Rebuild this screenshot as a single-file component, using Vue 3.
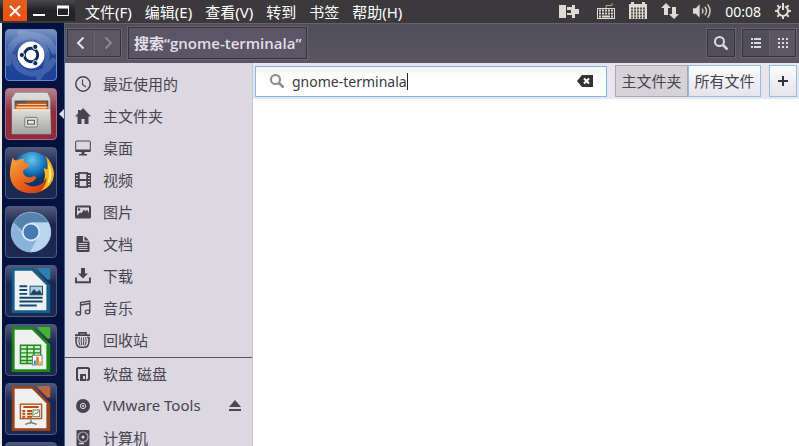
<script setup>
import { ref } from 'vue'

const query = ref('gnome-terminala')
const scope = ref('home')
const menus = ['文件(F)', '编辑(E)', '查看(V)', '转到', '书签', '帮助(H)']

const places = [
  { name: '最近使用的', icon: '<circle cx="8" cy="8" r="7.2" fill="none" stroke="currentColor" stroke-width="1.5"/><path d="M7.5 3.5V8.5L11 11" fill="none" stroke="currentColor" stroke-width="1.1"/>' },
  { name: '主文件夹', icon: '<path d="M8 0 16 8.500H13.500V16H9.500V11H6.500V16H2.500V8.500H0L3 5.500V2H5.500V3Z" fill="currentColor"/>' },
  { name: '桌面', icon: '<rect x=".7" y="1" width="14.600" height="10.500" rx="1" fill="none" stroke="currentColor"/><path d="M.5 9.500H15.500V12H.5ZM6.500 12H9.500V14H12V15.500H4V14H6.500Z" fill="currentColor"/>' },
  { name: '视频', icon: '<rect x="3.800" y="1" width="8.400" height="14" fill="none" stroke="currentColor" stroke-width="1.800"/><path d="M4 8H12" stroke="currentColor" stroke-width="2"/><path d="M1.500 1V15.500M14.500 1V15.500" stroke="currentColor" stroke-width="3" stroke-dasharray="2 1"/><path d="M.5 1V15.500M15.500 1V15.500" stroke="currentColor"/>' },
  { name: '图片', icon: '<path fill-rule="evenodd" d="M1.500 1.500H14.500Q16 1.500 16 3V13Q16 14.500 14.500 14.500H1.500Q0 14.500 0 13V3Q0 1.500 1.500 1.500ZM2 3.500V11.500L5 8.500 6.500 9 9 5.500 10.500 7.500 12 5.500 14 9V3.500Z" fill="currentColor"/><circle cx="4" cy="5.500" r="1.300" fill="currentColor"/>' },
  { name: '文档', icon: '<path d="M2 0H8V5.500H14.500V14.500Q14.500 16 13 16H3Q1.500 16 1.500 14.500V1Z" fill="currentColor"/><path d="M9.500 0 14 4.500H9.500Z" fill="currentColor"/><path d="M3.500 7.500H12.500M3.500 9.500H12.500M3.500 11.500H12.500M3.500 13.500H12.500" stroke="#dcd8e2" stroke-width=".9"/>' },
  { name: '下载', icon: '<path d="M6 0H10V5.500H13L8 10.500 3 5.500H6Z" fill="currentColor"/><path d="M1 9.500V14.200H15V9.500" fill="none" stroke="currentColor" stroke-width="1.900"/>' },
  { name: '音乐', icon: '<path d="M5.500 13V2.500L14.800 1V11.500M5.500 5 14.800 3.500" fill="none" stroke="currentColor" stroke-width="1.300"/><ellipse cx="3.300" cy="13.500" rx="2.300" ry="1.800" fill="none" stroke="currentColor" stroke-width="1.300"/><ellipse cx="12.500" cy="12" rx="2.300" ry="1.800" fill="none" stroke="currentColor" stroke-width="1.300"/>' },
  { name: '回收站', icon: '<path d="M0 3.200H15M4 3V.9H11V3" fill="none" stroke="currentColor" stroke-width="1.700"/><path d="M3 5.500H1V8Q1 15 5 15.200H10Q14 15 14 8V5.500H12" fill="none" stroke="currentColor" stroke-width="1.600"/><path d="M4.500 5Q2.800 9 5 13.500M6.500 5.500Q5.800 9 6.700 13M8.500 5.500Q9.200 9 8.300 13M10.500 5Q12.200 9 10 13.500" fill="none" stroke="currentColor"/>' },
]

const devices = [
  { name: '软盘 磁盘', icon: '<path d="M4 14H2.500L2 13V3L3 2H13L14 3V13L13 14H11.500" fill="none" stroke="currentColor" stroke-width="2"/><path d="M5 8H11V15H5ZM8 10V13H10V10Z" fill-rule="evenodd" fill="currentColor"/>' },
  { name: 'VMware Tools', eject: true, icon: '<circle cx="8" cy="8" r="7" fill="currentColor"/><circle cx="8" cy="8" r="2.600" fill="none" stroke="#dcd8e2"/><circle cx="8" cy="8" r="1" fill="#dcd8e2"/>' },
  { name: '计算机', icon: '<rect x="1.500" y="0" width="13" height="16" rx="1" fill="currentColor"/><circle cx="8" cy="7" r="5" fill="none" stroke="#aaa6b2" stroke-width="1.200"/><circle cx="8" cy="7" r="1.500" fill="#dcd8e2"/><path d="M4 13.500H9" stroke="#dcd8e2" stroke-width="1.500"/>' },
]
</script>

<template>
  <div class="desktop">
    <header class="menubar">
      <div class="window-buttons">
        <button class="close" aria-label="关闭">
          <svg width="12" height="12" viewBox="0 0 12 12"><path d="M1 1 11 11M11 1 1 11" stroke="#fff" stroke-width="2" /></svg>
        </button>
        <button aria-label="最小化"><svg width="12" height="12" viewBox="0 0 12 12"><path d="M0 10H12" stroke="#fff" stroke-width="2" /></svg></button>
        <button aria-label="最大化"><svg width="12" height="12" viewBox="0 0 12 12"><path d="M.5 1V10.500H11.500V1" fill="none" stroke="#fff" /><path d="M0 2H12" stroke="#fff" stroke-width="3" /></svg></button>
      </div>
      <nav class="menus">
        <button v-for="m in menus" :key="m">{{ m }}</button>
      </nav>
      <div class="indicators">
        <button class="power" aria-label="电源"><svg width="20" height="16" viewBox="0 0 20 16"><path fill="#dfdbd2" d="M0 2H7V15H0ZM8 4H13V2H16V6H20V11H16V15H13V12H8V10H12V7H8Z" /></svg></button>
        <button aria-label="键盘"><svg width="18" height="18" viewBox="1 0 18 18"><path d="M10 6V3.500H16V1" fill="none" stroke="#aaa7a1" /><rect x="1.500" y="6.500" width="17" height="10" fill="none" stroke="#dfdbd2" /><path d="M3 8.500H17M3 11.500H17" stroke="#dfdbd2" stroke-width="2" stroke-dasharray="2 1" /><path d="M3 14.500H5M6 14.500H14M15 14.500H17" stroke="#dfdbd2" stroke-width="2" /></svg></button>
        <button aria-label="日历"><svg width="18" height="18" viewBox="0 0 18 18"><path d="M0 2H2V0H5V2H13V0H16V2H18V17H0Z" fill="#dfdbd2" /><path d="M2 6.500H16M2 9.500H16M2 12.500H16M2 15.500H16" stroke="#55524f" stroke-width="2" stroke-dasharray="2 1" /></svg></button>
        <button aria-label="网络"><svg width="18" height="16" viewBox="0 0 18 16"><path fill="#dfdbd2" d="M5 0 10 5H7V12H3V5H0ZM11 4H15V11H18L13 16 8 11H11Z" /></svg></button>
        <button aria-label="音量"><svg width="18" height="16" viewBox="0 0 19 16"><path fill="#dfdbd2" d="M0 5H3L7 1V15L3 11H0Z" /><path d="M9.500 5.500Q11.500 8 9.500 10.500M12.500 3.500Q16 8 12.500 12.500M15.500 1Q20.500 8 15.500 15" fill="none" stroke="#c9c5be" stroke-width="1.600" /></svg></button>
        <time>00:08</time>
        <button aria-label="系统"><svg width="16" height="16" viewBox="0 0 16 16"><g fill="none" stroke="#dfdbd2"><path d="M6 3.300A5 5 0 1 0 10 3.300" stroke-width="2" /><path d="M8 0V7M0 8H3M13 8H16M8 13V16M2.300 2.300 4.400 4.400M13.700 2.300 11.600 4.400M2.300 13.700 4.400 11.600M13.700 13.700 11.600 11.600" stroke-width="2" /></g></svg></button>
      </div>
    </header>

    <div class="workspace">
      <nav class="launcher" aria-label="启动器">
        <button class="tile dash" aria-label="Dash">
          <svg viewBox="0 0 52 52">
            <g fill="none" stroke="#c9d9f6" stroke-linecap="round" opacity=".2"><path d="M2 34Q2 8 27 6 44 6 50 22" stroke-width="7" /><path d="M14 3Q38 2 43 26 43 40 34 50" stroke-width="5" /><path d="M49 32Q42 47 24 45 10 42 8 28" stroke-width="6" /></g>
            <circle cx="26" cy="26" r="14" fill="#fff" />
            <circle cx="26" cy="26" r="7" fill="none" stroke="#0c2a62" stroke-width="3" />
            <g fill="#0c2a62" stroke="#fff"><circle cx="16.500" cy="26" r="2.700" /><circle cx="30.500" cy="17.500" r="2.700" /><circle cx="30.500" cy="34.500" r="2.700" /></g>
          </svg>
        </button>
        <button class="tile files" aria-label="文件">
          <svg viewBox="0 0 52 52">
            <defs><linearGradient id="cab" x2="0" y2="1"><stop stop-color="#dededc" /><stop offset="1" stop-color="#a4a4a2" /></linearGradient></defs>
            <path d="M10 4H43L46 10V46H6V10Z" fill="url(#cab)" /><path d="M9 12H44V22H9Z" fill="#555" />
            <path d="M10 15H20L22 13H42V23H10Z" fill="#bd5012" /><path d="M10 18H43V24H10Z" fill="#f18a32" /><path d="M12 16H42M11 19H43" stroke="#ffe4bd" />
            <path d="M7 21H46L47 47H6Z" fill="url(#cab)" /><path d="M7 22H46" stroke="#efefef" />
            <rect x="19.500" y="29.500" width="13" height="10" rx="1" fill="#ddd" stroke="#777" /><rect x="22.500" y="32.500" width="7" height="4" fill="#eee" stroke="#444" />
          </svg>
        </button>
        <button class="tile" aria-label="Firefox">
          <svg viewBox="0 0 52 52">
            <defs><radialGradient id="globe" cx=".5" cy=".2"><stop stop-color="#65c8ed" /><stop offset=".6" stop-color="#1979bd" /><stop offset="1" stop-color="#073768" /></radialGradient><linearGradient id="fox" x2="1" y2="1"><stop stop-color="#f8a640" /><stop offset=".45" stop-color="#ec681e" /><stop offset="1" stop-color="#c6290d" /></linearGradient></defs>
            <circle cx="27" cy="25" r="21" fill="url(#globe)" />
            <path d="M7 10Q9 15 13 12L19 11Q18 15 21 16L25 18Q22 22 18 23 17 26 20 29 25 32 29 29 34 30 29 34 24 38 18 35 26 43 36 38 44 34 44 24L43 12Q49 20 49 29 44 47 26 47 5 46 4 27 4 20 7 10Z" fill="url(#fox)" />
            <path d="M41 8Q49 16 50 27 49 40 36 45 43 38 42 31L39 35Q42 27 39 21L43 22Q44 14 41 8Z" fill="#fbb41a" /><path d="M44 16Q49 25 46 34L43 38 45 28Z" fill="#fff08a" />
          </svg>
        </button>
        <button class="tile" aria-label="Chromium">
          <svg viewBox="0 0 52 52">
            <circle cx="26" cy="26" r="21" fill="#9fc2e5" />
            <path d="M8 16A21 21 0 0 1 44 16H26L18 26Z" fill="#5682ab" /><path d="M8 16Q2 28 9 38 15 46 25 47L32 34 18 31Z" fill="#8ab3dc" /><path d="M26 16H44Q50 29 41 40 34 47 25 47L34 30Z" fill="#bad6ef" />
            <circle cx="26" cy="26" r="9.500" fill="#dfedf9" /><circle cx="26" cy="26" r="7.800" fill="#4779b6" />
          </svg>
        </button>
        <button class="tile" aria-label="Writer">
          <svg viewBox="0 0 52 52">
            <path d="M6 3Q6 2 7 2H28L46 20V48Q46 49 45 49H7Q6 49 6 48Z" fill="#11618f" /><path d="M9 5H27L42 20V46H9Z" fill="#f0f0f0" /><path d="M32 2H45L46 3V13Q45 15 43 14L34 5Z" fill="#2b80b2" />
            <path d="M14 21H22M14 25H22M14 29H22M14 33H38M14 37H38M14 41H32" stroke="#124a70" stroke-width="2" /><rect x="25" y="21" width="13" height="9" fill="#a5d1ed" stroke="#135072" /><path d="M25 30 29 24 32 27 35 25 38 30Z" fill="#21445a" /><circle cx="35" cy="23" r="1" fill="#edcf65" />
          </svg>
        </button>
        <button class="tile" aria-label="Calc">
          <svg viewBox="0 0 52 52">
            <path d="M6 3Q6 2 7 2H28L46 20V48Q46 49 45 49H7Q6 49 6 48Z" fill="#188b10" /><path d="M9 5H27L42 20V46H9Z" fill="#f0f0f0" /><path d="M32 2H45L46 3V13Q45 15 43 14L34 5Z" fill="#43b52d" />
            <rect x="15" y="21" width="21" height="19" fill="#d0ecc9" /><path d="M15 21H36V40H15ZM15 25H36M15 29H36M15 33H36M15 37H36M22 21V40M29 21V40" fill="none" stroke="#218a21" stroke-width="1.500" />
            <rect x="27.500" y="31.500" width="10" height="10" fill="#fff" stroke="#777" /><path d="M29 37H31V41H29Z" fill="#168bd1" /><path d="M31.500 33H34V41H31.500Z" fill="#e17018" /><path d="M34.500 38H37V41H34.500Z" fill="#e2b71c" />
          </svg>
        </button>
        <button class="tile" aria-label="Impress">
          <svg viewBox="0 0 52 52">
            <path d="M6 3Q6 2 7 2H28L46 20V48Q46 49 45 49H7Q6 49 6 48Z" fill="#99431b" /><path d="M9 5H27L42 20V46H9Z" fill="#f0f0f0" /><path d="M32 2H45L46 3V13Q45 15 43 14L34 5Z" fill="#bd663b" />
            <rect x="15" y="21" width="22" height="15" fill="#fff5e9" stroke="#ae592b" stroke-width="1.500" /><path d="M18 24H34M17 28H20M22 28H27M17 31H20M22 31H27M17 34H20M22 34H27" stroke="#b44c18" stroke-width="2" /><rect x="28" y="27" width="7" height="7" fill="#fff" stroke="#63744e" /><path d="M29 32 31 30 32 31 34 28" fill="none" stroke="#26952b" /><path d="M26 37V40L20 42M26 40 32 42" stroke="#777" stroke-width="1.500" fill="none" />
          </svg>
        </button>
        <button class="tile" aria-label="软件中心"></button>
      </nav>

      <section class="files-window">
        <div class="toolbar">
          <div class="group">
            <button aria-label="后退"><svg width="16" height="16" viewBox="0 0 16 16"><path d="M10.500 2.500 5 8 10.500 13.500" fill="none" stroke="#e5e1ea" stroke-width="2" /></svg></button>
            <button aria-label="前进" disabled><svg width="16" height="16" viewBox="0 0 16 16"><path d="M5.500 2.500 11 8 5.500 13.500" fill="none" stroke="#8b8793" stroke-width="2" /></svg></button>
          </div>
          <button class="location">搜索“gnome-terminala”</button>
          <div class="group search-toggle">
            <button class="pressed" aria-label="搜索"><svg width="16" height="16" viewBox="0 0 16 16"><circle cx="6.500" cy="6.500" r="4.500" fill="none" stroke="#dcd8e4" stroke-width="2" /><path d="M10 10 14.500 14.500" stroke="#dcd8e4" stroke-width="2.500" /></svg></button>
          </div>
          <div class="group">
            <button class="pressed" aria-label="列表视图"><svg width="10" height="10" viewBox="0 0 10 10"><path d="M0 1H2M3 1H10M0 5H2M3 5H10M0 9H2M3 9H10" stroke="#dcd8e4" stroke-width="2" /></svg></button>
            <button aria-label="图标视图"><svg width="10" height="10" viewBox="0 0 10 10"><path d="M0 1H10M0 5H10M0 9H10" stroke="#dcd8e4" stroke-width="2" stroke-dasharray="2 2" /></svg></button>
          </div>
        </div>

        <div class="panes">
          <aside class="sidebar">
            <ul>
              <li v-for="p in places" :key="p.name">
                <a href="#"><svg width="16" height="16" viewBox="0 0 16 16" v-html="p.icon"></svg><span>{{ p.name }}</span></a>
              </li>
            </ul>
            <ul class="devices">
              <li v-for="d in devices" :key="d.name">
                <a href="#"><svg width="16" height="16" viewBox="0 0 16 16" v-html="d.icon"></svg><span>{{ d.name }}</span></a>
                <button v-if="d.eject" aria-label="弹出"><svg width="12" height="12" viewBox="0 0 12 12"><path d="M6 0 12 7H0ZM0 9H12V11H0Z" fill="#4a4753" /></svg></button>
              </li>
            </ul>
          </aside>

          <main class="content">
            <div class="searchbar">
              <div class="field">
                <label for="query" aria-label="搜索"><svg width="16" height="16" viewBox="0 0 16 16"><circle cx="6.500" cy="6.500" r="4.500" fill="none" stroke="#8a898c" stroke-width="2" /><path d="M10 10 14.500 14.500" stroke="#8a898c" stroke-width="2.500" /></svg></label>
                <div class="entry"><input id="query" v-model="query" type="text" /><span class="caret"></span></div>
                <button aria-label="清除" @click="query = ''"><svg width="16" height="12" viewBox="0 0 16 12"><path d="M5 0H16V12H5L0 6Z" fill="#333" /><path d="M7 3.500 12 8.500M12 3.500 7 8.500" stroke="#fff" stroke-width="2" /></svg></button>
              </div>
              <div class="scope">
                <button :class="{ active: scope === 'home' }" @click="scope = 'home'">主文件夹</button>
                <button :class="{ active: scope === 'all' }" @click="scope = 'all'">所有文件</button>
              </div>
              <button class="add" aria-label="添加条件"><svg width="10" height="10" viewBox="0 0 10 10"><path d="M5 0V10M0 5H10" stroke="#333" stroke-width="2" /></svg></button>
            </div>
            <div class="results"></div>
          </main>
        </div>
      </section>
    </div>
  </div>
</template>

<style>
body {
  margin: 0;
}
</style>

<style scoped>
.desktop {
  display: flex;
  flex-direction: column;
  height: 100vh;
  overflow: hidden;
  box-sizing: border-box;
  font-family: "Noto Sans", "Noto Sans CJK SC", sans-serif;
  font-size: 15px;
  color: #47444f;
}
button {
  display: flex;
  align-items: center;
  justify-content: center;
  box-sizing: border-box;
  margin: 0;
  padding: 0;
  border: 0;
  background: none;
  color: inherit;
  font: inherit;
  white-space: nowrap;
}
svg {
  display: block;
  flex: none;
}
.menubar {
  display: flex;
  flex: none;
  height: 23px;
  background: #3b393b;
  color: #fff;
}
.window-buttons {
  display: flex;
  height: 21px;
  padding-left: 3px;
  background: linear-gradient(#4a4850, #232224 50%);
}
.window-buttons button {
  width: 24px;
}
.window-buttons .close {
  background: linear-gradient(#df5f1f, #ef5010);
}
.menus {
  display: flex;
  gap: 13px;
  flex: 1;
  padding: 0 0 1px 10px;
}
.indicators {
  display: flex;
  align-items: center;
  gap: 14px;
  padding: 0 8px 1px 0;
}
.indicators .power {
  margin-right: 4px;
}
.indicators time {
  font-size: 14px;
}
.workspace {
  display: flex;
  flex: 1;
  min-height: 0;
}
.launcher {
  display: flex;
  flex: none;
  flex-direction: column;
  gap: 7px;
  box-sizing: border-box;
  width: 65px;
  padding: 6px 6px 0 3px;
  overflow: hidden;
  background: #03123f;
  border-left: 2px solid #eeeae5;
  border-right: 1px solid #3f6a96;
}
.tile {
  position: relative;
  flex: none;
  width: 52px;
  height: 52px;
  border: 1px solid #4f5a7d;
  border-radius: 4px;
  background: linear-gradient(#50597a, #1b2750 35%, #1c2951);
}
.tile svg {
  width: 50px;
  height: 50px;
}
.tile.dash {
  border-color: #6b8bc8;
  background: linear-gradient(#7792c2, #24479a 50%, #1c4199);
}
.tile.files {
  border-color: #b96b7b;
  background: linear-gradient(#b18590, #88303f 45%, #8e2c3e);
}
.tile.files::after {
  content: "";
  position: absolute;
  top: 20px;
  right: -8px;
  border: 5px solid transparent;
  border-left: 0;
  border-right-color: #dcdce5;
}
.files-window {
  display: flex;
  flex: 1;
  flex-direction: column;
  min-width: 0;
}
.toolbar {
  display: flex;
  flex: none;
  align-items: center;
  gap: 7px;
  box-sizing: border-box;
  height: 40px;
  padding: 0 3px 1px 2px;
  background: linear-gradient(#504d59, #5a5664);
  border-top: 1px solid #656270;
  color: #e3dfe9;
}
.group {
  display: flex;
  border: 1px solid #353239;
  outline: 1px solid #686472;
}
.group button {
  width: 26px;
  height: 26px;
  background: #5a5664;
}
.group button + button {
  border-left: 1px solid #68646f;
}
.group button.pressed {
  background: #514e5b;
}
.location {
  height: 32px;
  padding: 0 5px 2px;
  border: 1px solid #353239;
  outline: 1px solid #686472;
  background: #5b5666;
  font-family: "Open Sans", "Noto Sans CJK SC", sans-serif;
  font-weight: 600;
}
.search-toggle {
  margin-left: auto;
}
.panes {
  display: flex;
  flex: 1;
  min-height: 0;
}
.sidebar {
  flex: none;
  box-sizing: border-box;
  width: 188px;
  padding-top: 6px;
  overflow: hidden;
  background: #dcd8e2;
  border-right: 1px solid #c8c4ce;
}
.sidebar ul {
  margin: 0;
  padding: 0;
  list-style: none;
}
.sidebar .devices {
  padding-top: 1px;
  border-top: 1px solid #57535f;
}
.sidebar li {
  display: flex;
  align-items: center;
  box-sizing: border-box;
  height: 32px;
  padding: 0 11px 2px 10px;
}
.sidebar a {
  display: flex;
  flex: 1;
  align-items: center;
  gap: 12px;
  color: inherit;
  text-decoration: none;
}
.sidebar span {
  padding-bottom: 2px;
}
.content {
  display: flex;
  flex: 1;
  flex-direction: column;
  min-width: 0;
  background: #fff;
}
.searchbar {
  display: flex;
  flex: none;
  align-items: center;
  gap: 8px;
  box-sizing: border-box;
  height: 36px;
  padding: 0 2px;
  background: #e8e5ec;
}
.field {
  display: flex;
  flex: 1;
  align-items: center;
  box-sizing: border-box;
  min-width: 0;
  height: 31px;
  padding: 0 13px;
  border: 1px solid #7fb5e4;
  background: linear-gradient(#f5f5f5, #fff 50%);
}
.entry {
  display: flex;
  flex: 1;
  align-items: center;
  min-width: 0;
  padding-left: 7px;
}
.entry input {
  field-sizing: content;
  padding: 0;
  border: 0;
  outline: 0;
  background: none;
  color: #3a3a3c;
  font: inherit;
  font-size: 14px;
  caret-color: transparent;
}
.caret {
  width: 1px;
  height: 17px;
  background: #222;
}
.scope {
  display: flex;
  height: 32px;
}
.scope button {
  width: 73px;
  padding-bottom: 2px;
  border: 1px solid #8ebde8;
  background: linear-gradient(#fafafb, #e7e4ec);
}
.scope button.active {
  border-color: #aaa8ad;
  background: #d5d3d7;
}
.add {
  width: 28px;
  height: 32px;
  border: 1px solid #8ebde8;
  background: linear-gradient(#fafafb, #e7e4ec);
}
.results {
  flex: 1;
}
</style>
